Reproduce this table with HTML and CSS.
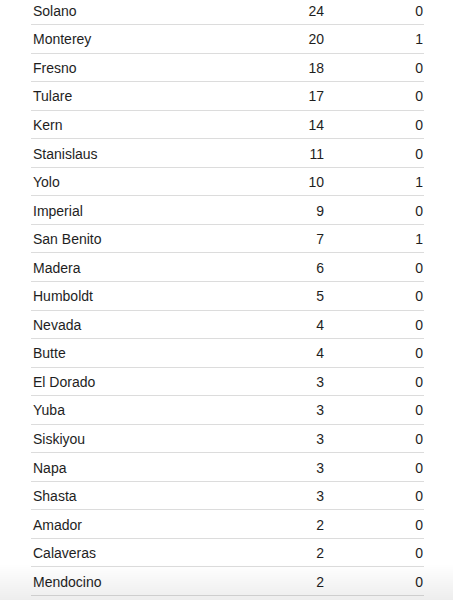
FILE: index.html
```html
<!DOCTYPE html>
<html>
<head>
<meta charset="utf-8">
<link rel="stylesheet" href="styles.css">
</head>
<body>
<div class="table">
  <div class="row"><span class="name">Solano</span><span class="num">24</span><span class="num">0</span></div>
  <div class="row"><span class="name">Monterey</span><span class="num">20</span><span class="num">1</span></div>
  <div class="row"><span class="name">Fresno</span><span class="num">18</span><span class="num">0</span></div>
  <div class="row"><span class="name">Tulare</span><span class="num">17</span><span class="num">0</span></div>
  <div class="row"><span class="name">Kern</span><span class="num">14</span><span class="num">0</span></div>
  <div class="row"><span class="name">Stanislaus</span><span class="num">11</span><span class="num">0</span></div>
  <div class="row"><span class="name">Yolo</span><span class="num">10</span><span class="num">1</span></div>
  <div class="row"><span class="name">Imperial</span><span class="num">9</span><span class="num">0</span></div>
  <div class="row"><span class="name">San Benito</span><span class="num">7</span><span class="num">1</span></div>
  <div class="row"><span class="name">Madera</span><span class="num">6</span><span class="num">0</span></div>
  <div class="row"><span class="name">Humboldt</span><span class="num">5</span><span class="num">0</span></div>
  <div class="row"><span class="name">Nevada</span><span class="num">4</span><span class="num">0</span></div>
  <div class="row"><span class="name">Butte</span><span class="num">4</span><span class="num">0</span></div>
  <div class="row"><span class="name">El Dorado</span><span class="num">3</span><span class="num">0</span></div>
  <div class="row"><span class="name">Yuba</span><span class="num">3</span><span class="num">0</span></div>
  <div class="row"><span class="name">Siskiyou</span><span class="num">3</span><span class="num">0</span></div>
  <div class="row"><span class="name">Napa</span><span class="num">3</span><span class="num">0</span></div>
  <div class="row"><span class="name">Shasta</span><span class="num">3</span><span class="num">0</span></div>
  <div class="row"><span class="name">Amador</span><span class="num">2</span><span class="num">0</span></div>
  <div class="row"><span class="name">Calaveras</span><span class="num">2</span><span class="num">0</span></div>
  <div class="row"><span class="name">Mendocino</span><span class="num">2</span><span class="num">0</span></div>
</div>
<div class="fade"></div>
</body>
</html>
```
FILE: styles.css
```css
html, body {
  margin: 0;
  padding: 0;
  background: #fff;
  overflow: hidden;
}
body {
  font-family: "Liberation Sans", Arial, sans-serif;
  font-size: 14px;
  color: #1e1e1e;
}
.table {
  width: 393px;
  margin: -3.5px 0 0 31px;
}
.row {
  display: grid;
  grid-template-columns: 1fr 100px 99px;
  align-items: center;
  box-sizing: border-box;
  height: 28.55px;
  padding: 1px 1px 0 1px;
  border-bottom: 1px solid #dcdcdc;
}
.name {
  padding-left: 1px;
}
.num {
  text-align: right;
}
.fade {
  position: fixed;
  left: 0;
  right: 0;
  bottom: 0;
  height: 36px;
  background: linear-gradient(to bottom, rgba(0,0,0,0), rgba(0,0,0,0.07));
  pointer-events: none;
}
```
